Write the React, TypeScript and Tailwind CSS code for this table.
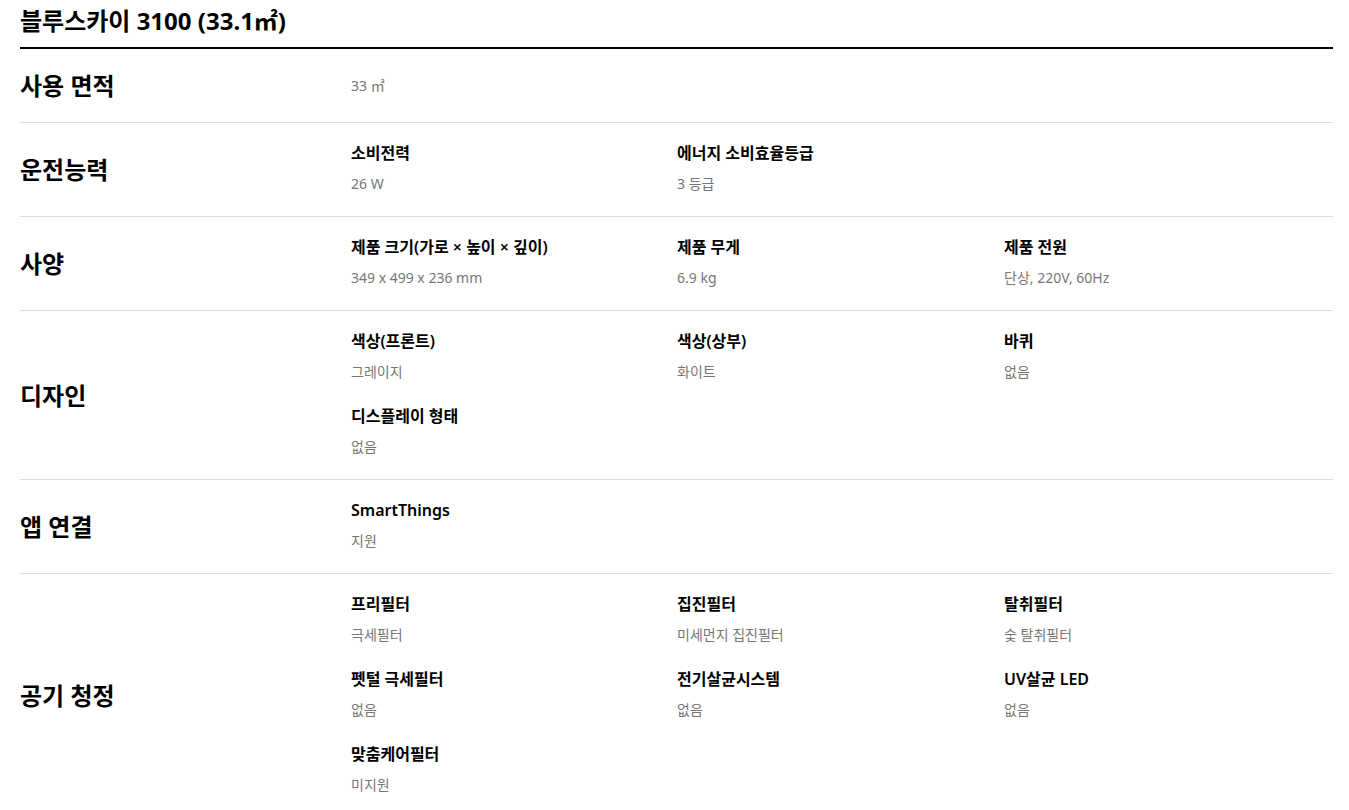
import React from "react";

type Spec = { title?: string; value: string };
type Section = { label: string; items: Spec[] };

const sections: Section[] = [
  { label: "사용 면적", items: [{ value: "33 ㎡" }] },
  {
    label: "운전능력",
    items: [
      { title: "소비전력", value: "26 W" },
      { title: "에너지 소비효율등급", value: "3 등급" },
    ],
  },
  {
    label: "사양",
    items: [
      { title: "제품 크기(가로 × 높이 × 깊이)", value: "349 x 499 x 236 mm" },
      { title: "제품 무게", value: "6.9 kg" },
      { title: "제품 전원", value: "단상, 220V, 60Hz" },
    ],
  },
  {
    label: "디자인",
    items: [
      { title: "색상(프론트)", value: "그레이지" },
      { title: "색상(상부)", value: "화이트" },
      { title: "바퀴", value: "없음" },
      { title: "디스플레이 형태", value: "없음" },
    ],
  },
  { label: "앱 연결", items: [{ title: "SmartThings", value: "지원" }] },
  {
    label: "공기 청정",
    items: [
      { title: "프리필터", value: "극세필터" },
      { title: "집진필터", value: "미세먼지 집진필터" },
      { title: "탈취필터", value: "숯 탈취필터" },
      { title: "펫털 극세필터", value: "없음" },
      { title: "전기살균시스템", value: "없음" },
      { title: "UV살균 LED", value: "없음" },
      { title: "맞춤케어필터", value: "미지원" },
    ],
  },
];

function SpecItem({ title, value }: Spec) {
  return (
    <div>
      {title && (
        <p className="text-base font-semibold leading-5 text-black mb-[9px]">
          {title}
        </p>
      )}
      <p className="text-sm leading-6 text-[#767676]">{value}</p>
    </div>
  );
}

function SpecRow({ label, items, last }: Section & { last?: boolean }) {
  return (
    <div
      className={
        "grid grid-cols-[331px_1fr] py-5 " +
        (last ? "" : "border-b border-[#dddddd]")
      }
    >
      <div className="flex items-center text-2xl font-bold leading-[33px] text-black">
        {label}
      </div>
      <div className="grid grid-cols-[326px_327px_1fr] gap-y-[22px] content-center">
        {items.map((it, i) => (
          <SpecItem key={i} {...it} />
        ))}
      </div>
    </div>
  );
}

export default function App() {
  return (
    <div
      className="bg-white min-h-screen pl-5 pr-4"
      style={{ fontFamily: '"Noto Sans", "Noto Sans CJK KR", sans-serif' }}
    >
      <h2 className="pt-[5px] pb-[10px] text-2xl font-bold leading-8 text-black border-b-2 border-black">
        블루스카이 3100 (33.1㎡)
      </h2>
      {sections.map((s, i) => (
        <SpecRow key={s.label} {...s} last={i === sections.length - 1} />
      ))}
    </div>
  );
}
